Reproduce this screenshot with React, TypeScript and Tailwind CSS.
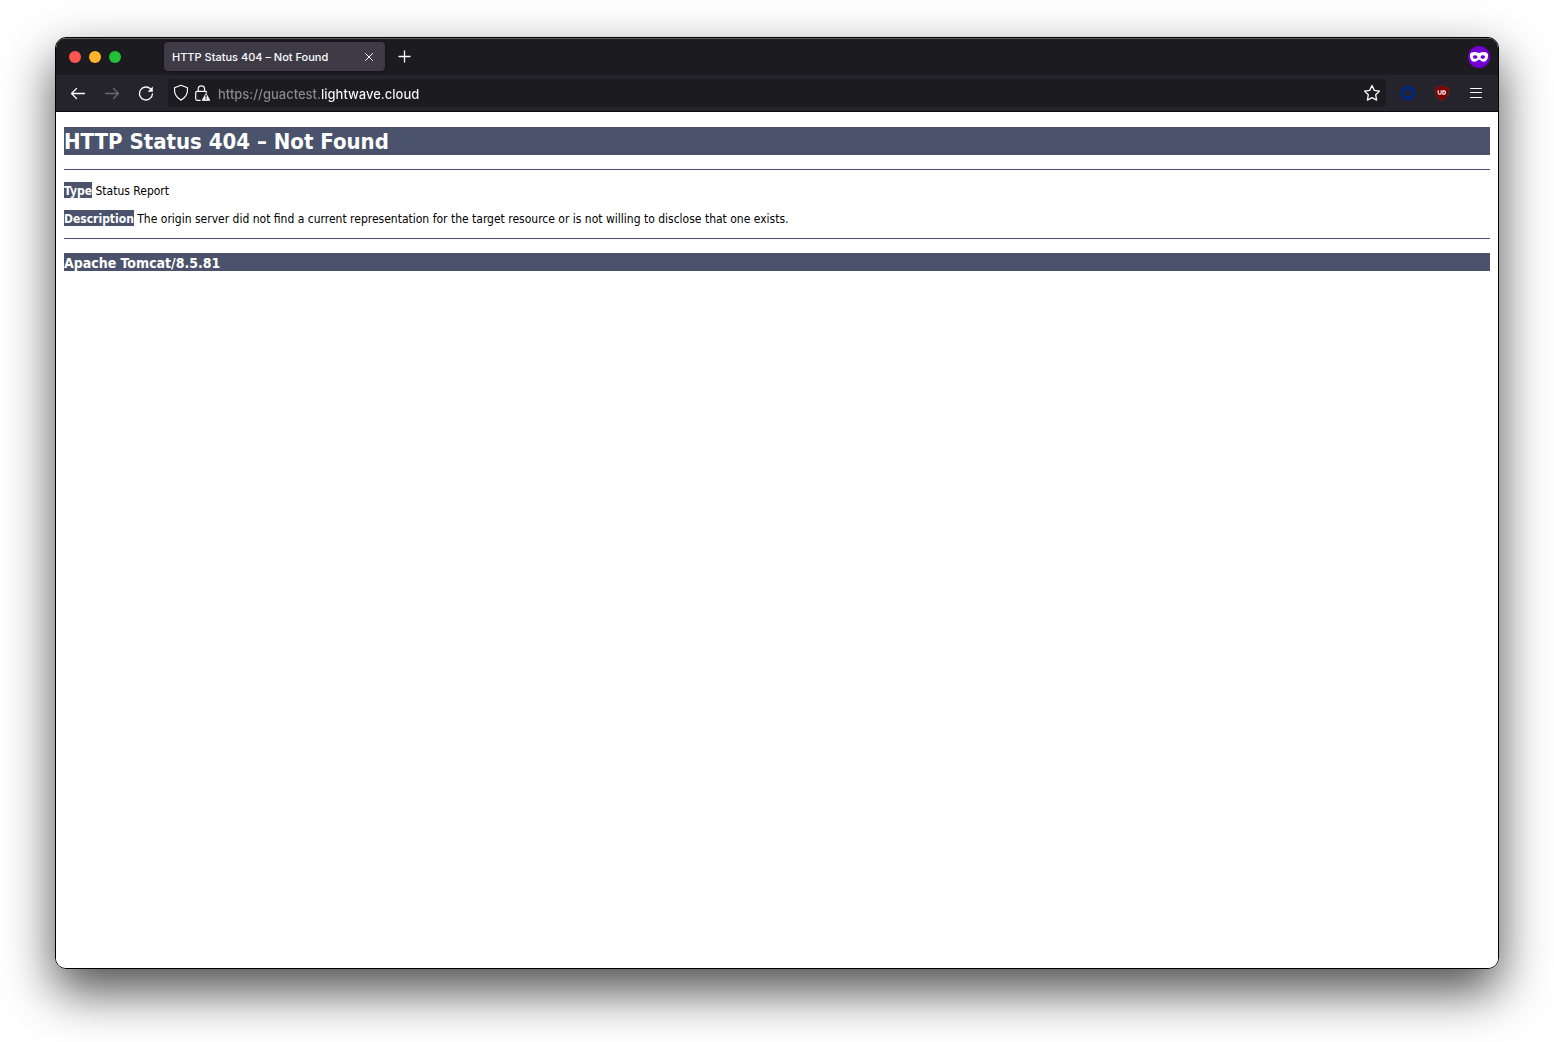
import React from 'react';

interface IconButtonProps {
  label: string;
  className?: string;
  disabled?: boolean;
  children: React.ReactNode;
}

const IconButton: React.FC<IconButtonProps> = ({
  label,
  className = 'h-8 w-[34px]',
  disabled = false,
  children,
}) => (
  <button
    type="button"
    aria-label={label}
    disabled={disabled}
    className={`flex shrink-0 items-center justify-center text-[#fbfbfe] disabled:text-[#6a6a71] ${className}`}
  >
    {children}
  </button>
);

const TabBar: React.FC = () => (
  <header className="flex h-[37px] items-center border-t border-[#5c5c60] bg-[#1c1b20] pr-2 pb-px pl-[13px]">
    <div className="flex w-[95px] gap-2">
      <button type="button" aria-label="Close window" className="size-3 rounded-full bg-[#ff5450]" />
      <button type="button" aria-label="Minimize window" className="size-3 rounded-full bg-[#ffb429]" />
      <button type="button" aria-label="Zoom window" className="size-3 rounded-full bg-[#24c138]" />
    </div>
    <div className="flex h-[29px] w-[221px] items-center justify-between rounded bg-[#3e3b47] pr-2 pl-2 shadow-[0_0_3px_rgba(0,0,0,0.6)]">
      <span className="truncate pt-0.5 text-[11px] font-medium text-[#fbfbfe]">HTTP Status 404 – Not Found</span>
      <IconButton label="Close tab" className="size-4">
        <svg className="size-4" viewBox="0 0 16 16" fill="none" stroke="currentColor" strokeLinecap="round">
          <path d="M4.5 4.5l7 7M11.5 4.5l-7 7" />
        </svg>
      </IconButton>
    </div>
    <IconButton label="New tab" className="size-10">
      <svg className="size-4" viewBox="0 0 16 16" fill="none" stroke="currentColor" strokeWidth="1.3" strokeLinecap="round">
        <path d="M7.5 2v11M2 7.5h11" />
      </svg>
    </IconButton>
    <svg className="ml-auto size-[22px]" viewBox="0 0 22 22" role="img" aria-label="Private browsing">
      <circle cx="11" cy="11" r="11" fill="#7300d3" />
      <path
        fill="#fff"
        fillRule="evenodd"
        d="M2 8.600C2 6.800 4.500 6 6.800 6 8.800 6 9.800 7 11 7s2.200-1 4.200-1C17.500 6 20 6.800 20 8.600c.2 4-1.200 7.200-4.300 7.200-2.400 0-3.200-2-4.700-2s-2.300 2-4.700 2C3.200 15.800 1.800 12.600 2 8.600zM4.700 11c.6 1.200 1.500 1.800 2.600 1.800 1.200 0 2-.7 2.200-1.800-.4-1.100-1.200-1.700-2.300-1.700S5.300 9.900 4.700 11zM12.500 11c.2 1.100 1 1.800 2.200 1.800 1.100 0 2-.6 2.600-1.800-.6-1.100-1.400-1.700-2.500-1.700s-1.900.6-2.300 1.700z"
      />
    </svg>
  </header>
);

const AddressBar: React.FC = () => (
  <div className="mx-[5px] flex h-7 flex-1 items-center rounded bg-[#1c1b20] px-[3px]">
    <IconButton label="Tracking protection" className="h-7 w-5">
      <svg className="size-5" viewBox="0 0 20 20" fill="none" stroke="currentColor" strokeWidth="1.2" strokeLinejoin="round">
        <path d="M10 2.300l6.500 2.500c.4 4.500-1.200 9.600-6.500 12.300C4.700 14.400 3.100 9.300 3.500 4.800z" />
      </svg>
    </IconButton>
    <IconButton label="Connection is not secure" className="h-7 w-[22px]">
      <svg className="size-5" viewBox="0 0 20 20" fill="none">
        <path
          stroke="currentColor"
          strokeWidth="1.2"
          strokeLinecap="round"
          d="M6.200 8.300V6a3.200 3.200 0 0 1 6.400 0v2.300M8.200 17.300H5.300a1.600 1.600 0 0 1-1.600-1.600V9.900a1.600 1.600 0 0 1 1.600-1.600h8a1.600 1.600 0 0 1 1.400.9"
        />
        <path fill="currentColor" stroke="currentColor" strokeLinejoin="round" d="M14 10.500l3.700 6.800h-7.400z" />
        <path stroke="#1c1b20" strokeWidth="1.300" d="M14 11.800v2.700M14 15.300v1.300" />
      </svg>
    </IconButton>
    {/* the host is brighter than the scheme and subdomain before it */}
    <input
      type="text"
      aria-label="Address"
      defaultValue="https://guactest.lightwave.cloud"
      className="ml-[5px] min-w-0 flex-1 bg-[linear-gradient(to_right,#8a8a8f_104px,#fbfbfe_104px)] bg-clip-text pt-[3px] text-[13px] font-medium text-transparent outline-none"
    />
    <IconButton label="Bookmark this page" className="h-7 w-[22px]">
      <svg className="size-5" viewBox="0 0 20 20" fill="none" stroke="currentColor" strokeWidth="1.300" strokeLinejoin="round">
        <path d="M10 2.500l2.300 4.900 5.200.7-3.800 3.700.9 5.300-4.600-2.500-4.600 2.500.9-5.300-3.800-3.700 5.200-.7z" />
      </svg>
    </IconButton>
  </div>
);

const Toolbar: React.FC = () => (
  <nav className="flex h-9 items-center bg-[#25242c] px-[5px]">
    <IconButton label="Back">
      <svg className="size-4" viewBox="0 0 16 16" fill="none" stroke="currentColor" strokeWidth="1.300" strokeLinecap="round" strokeLinejoin="round">
        <path d="M14.500 8.500H1.500M6.500 3.500l-5 5 5 5" />
      </svg>
    </IconButton>
    <IconButton label="Forward" disabled>
      <svg className="size-4" viewBox="0 0 16 16" fill="none" stroke="currentColor" strokeWidth="1.300" strokeLinecap="round" strokeLinejoin="round">
        <path d="M1.500 8.500h13M9.500 3.500l5 5-5 5" />
      </svg>
    </IconButton>
    <IconButton label="Reload">
      <svg className="size-4" viewBox="0 0 16 16" fill="none">
        <path stroke="currentColor" strokeWidth="1.300" strokeLinecap="round" d="M12.800 4.100A6.500 6.500 0 1 0 14.500 8.800" />
        <path fill="currentColor" d="M14.800 1.600v5.200H9.700z" />
      </svg>
    </IconButton>
    <AddressBar />
    <IconButton label="Container extension">
      <svg className="size-4" viewBox="0 0 16 16" fill="none">
        <circle cx="8" cy="8" r="5.500" stroke="#00277a" strokeWidth="3.800" />
      </svg>
    </IconButton>
    <IconButton label="Ad blocker">
      <svg className="size-4" viewBox="0 0 16 16" fill="none">
        <path fill="#800000" stroke="#5f3036" strokeWidth=".6" d="M8 .4c2 1.300 4.300 1.800 7 1.800 0 6.300-.8 10-7 13.500C1.800 12.200 1 8.500 1 2.200 3.700 2.200 6 1.700 8 .4z" />
        <path stroke="#fff" strokeWidth="1.100" d="M4.200 5.300v2.500a1.500 1.500 0 0 0 3 0V5.300M8.900 5.900h.9a1.700 1.700 0 0 1 0 3.400h-.9z" />
      </svg>
    </IconButton>
    <IconButton label="Open application menu">
      <svg className="size-4" viewBox="0 0 16 16" stroke="currentColor" strokeWidth="1.200" strokeLinecap="round">
        <path d="M2.500 3.500h11M2.500 7.500h11M2.500 12.500h11" />
      </svg>
    </IconButton>
  </nav>
);

const ErrorPage: React.FC = () => (
  <main className="flex-1 bg-white px-2 pt-[15px] font-['DejaVu_Sans_Condensed',Tahoma,sans-serif] text-xs text-black">
    <h1 className="bg-[#4a536b] pt-0.5 text-[22px] leading-[26px] font-bold text-white">HTTP Status 404 – Not Found</h1>
    <hr className="mt-3.5 border-[#4a536b]" />
    <p className="mt-[13px] leading-4">
      <b className="bg-[#4a536b] pt-0.5 text-white">Type</b> Status Report
    </p>
    <p className="mt-3 leading-4">
      <b className="bg-[#4a536b] pt-0.5 text-white">Description</b> The origin server did not find a current
      representation for the target resource or is not willing to disclose that one exists.
    </p>
    <hr className="mt-[11px] border-[#4a536b]" />
    <h3 className="mt-3.5 bg-[#4a536b] pt-0.5 text-sm leading-4 font-bold text-white">Apache Tomcat/8.5.81</h3>
  </main>
);

const App: React.FC = () => (
  <div className="flex min-h-screen flex-col bg-white px-[55px] pt-[37px] pb-[73px] font-['Inter',sans-serif]">
    <div className="flex flex-1 flex-col overflow-hidden rounded-[11px] border border-black shadow-[0_22px_50px_rgba(0,0,0,0.7)]">
      <TabBar />
      <div className="border-b border-[#0c0c0d]">
        <Toolbar />
      </div>
      <ErrorPage />
    </div>
  </div>
);

export default App;
